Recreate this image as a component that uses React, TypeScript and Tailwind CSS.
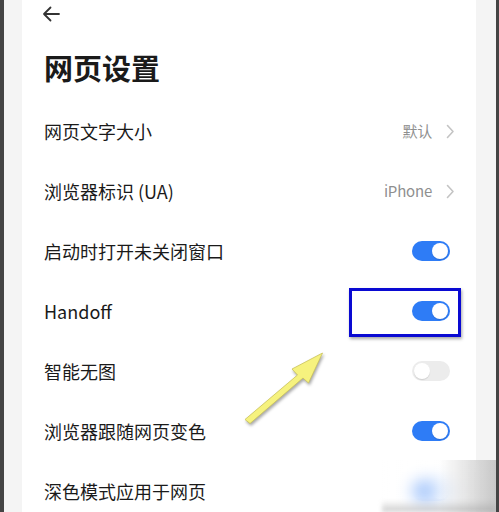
import { ReactNode } from "react";

const font = { fontFamily: '"Noto Sans CJK SC", "Noto Sans", sans-serif' };

const Toggle = ({ on }: { on: boolean }) => (
  <div
    className={`w-[38px] h-[20px] rounded-full p-[2px] flex items-center ${
      on ? "bg-[#2e7cf6] justify-end" : "bg-[#ececec] justify-start"
    }`}
  >
    <div className="w-[16px] h-[16px] rounded-full bg-white shadow-[0_1px_1px_rgba(0,0,0,0.12)]" />
  </div>
);

const Chevron = () => (
  <svg width="9" height="15" viewBox="0 0 9 15" fill="none" className="ml-[14px]">
    <path d="M1.5 1.5 L7 7.5 L1.5 13.5" stroke="#c4c4c4" strokeWidth="1.6" strokeLinecap="round" strokeLinejoin="round" />
  </svg>
);

const Value = ({ label }: { label: string }) => (
  <div className="flex items-center -mr-[5px]">
    <span className="text-[15px] text-[#8f8f8f] tracking-[-0.2px]">{label}</span>
    <Chevron />
  </div>
);

const Row = ({ title, right }: { title: string; right: ReactNode }) => (
  <div className="h-[60px] shrink-0 flex items-center justify-between pl-[22px] pr-[26px]">
    <span className="text-[18px] text-[#1a1a1a]">{title}</span>
    {right}
  </div>
);

const Arrow = () => (
  <svg
    className="absolute left-[236px] top-[346px] drop-shadow-[1px_2px_1.5px_rgba(0,0,0,0.35)]"
    width="90"
    height="84"
    viewBox="236 346 90 84"
  >
    <path
      d="M241 419.5 L293.5 375 L288 369 L318.5 353 L304.5 383 L299 378 L246 423.5 Z"
      fill="#f6f27e"
      stroke="#c9c25a"
      strokeWidth="0.8"
      strokeLinejoin="round"
    />
  </svg>
);

export default function App() {
  return (
    <div
      className="relative w-[499px] h-[512px] overflow-hidden flex bg-[#f4f4f4] border-l-4 border-r-[3px] border-[#444]"
      style={font}
    >
      <div className="ml-[18px] w-[454px] bg-white flex flex-col">
        <div className="h-[26px] shrink-0 flex items-center pl-[20px] pt-[2px]">
          <svg width="18" height="16" viewBox="0 0 18 16" fill="none">
            <path d="M17 8 H2 M8.5 1.5 L2 8 L8.5 14.5" stroke="#333" strokeWidth="1.8" strokeLinecap="round" strokeLinejoin="round" />
          </svg>
        </div>
        <div className="h-[75px] shrink-0 pt-[8px] flex items-center pl-[22px]">
          <h1 className="text-[29px] font-bold text-[#1a1a1a] leading-none">网页设置</h1>
        </div>
        <Row title="网页文字大小" right={<Value label="默认" />} />
        <Row title="浏览器标识 (UA)" right={<Value label="iPhone" />} />
        <Row title="启动时打开未关闭窗口" right={<Toggle on />} />
        <Row title="Handoff" right={<Toggle on />} />
        <Row title="智能无图" right={<Toggle on={false} />} />
        <Row title="浏览器跟随网页变色" right={<Toggle on />} />
        <Row title="深色模式应用于网页" right={<Toggle on />} />
      </div>

      {/* highlight box round the Handoff switch */}
      <div className="absolute left-[345px] top-[288px] w-[112px] h-[49px] border-[3px] border-[#0a0ad2] shadow-[1px_2px_3px_rgba(0,0,0,0.35)]" />

      <Arrow />

      {/* blurred corner patch */}
      <div className="absolute left-[378px] top-[460px] w-[114px] h-[52px] backdrop-blur-[8px] bg-gradient-to-r from-white/60 via-white/50 to-[#b5b5b5]/70" />
      <div className="absolute left-[378px] top-[500px] w-[114px] h-[12px] bg-gradient-to-b from-transparent to-[#9a9a9a]/50 blur-[2px]" />
    </div>
  );
}
